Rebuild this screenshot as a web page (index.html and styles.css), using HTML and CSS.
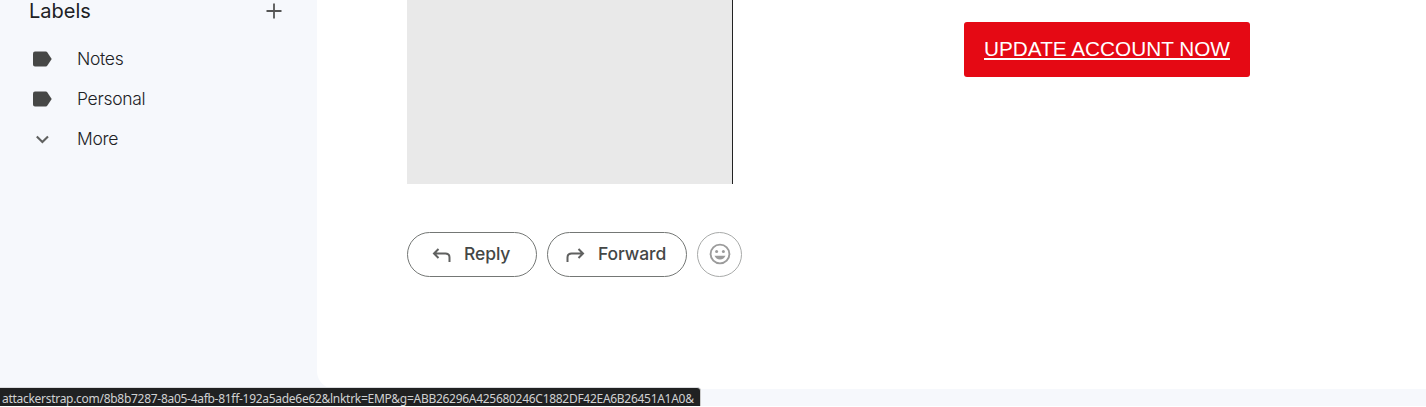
FILE: index.html
```html
<!DOCTYPE html>
<html lang="en">
<head>
<meta charset="utf-8">
<title>Mail</title>
<link rel="stylesheet" href="styles.css">
</head>
<body>
<div class="app">
  <nav class="sidebar">
    <div class="heading"><span>Labels</span>
      <svg width="16" height="16" viewBox="0 0 16 16"><path d="M8 .5v15M.5 8h15" fill="none" stroke="#555" stroke-width="1.8"/></svg>
    </div>
    <div class="label"><svg width="20" height="16" viewBox="0 0 20 16"><path d="M3 .5h10.700q1.100 0 1.700.9L19.700 8 15.400 14.600q-.6.9-1.700.9H3Q1 15.500 1 13.500v-11Q1 .5 3 .5z" fill="#464746"/></svg><span>Notes</span></div>
    <div class="label"><svg width="20" height="16" viewBox="0 0 20 16"><path d="M3 .5h10.700q1.100 0 1.700.9L19.700 8 15.400 14.600q-.6.9-1.700.9H3Q1 15.500 1 13.500v-11Q1 .5 3 .5z" fill="#464746"/></svg><span>Personal</span></div>
    <div class="label"><svg width="20" height="16" viewBox="0 0 20 16"><path d="M4.800 5.500 10.400 11 16 5.500" fill="none" stroke="#606160" stroke-width="2.100"/></svg><span>More</span></div>
  </nav>
  <main class="message">
    <div class="content">
      <div class="preview"></div>
      <a class="update"><span>UPDATE ACCOUNT NOW</span></a>
    </div>
    <div class="actions">
      <button class="pill reply"><svg width="20" height="18" viewBox="0 0 20 18"><path d="M6.500 3 2 7.500l4.500 4.500M2 7.500h11.500Q17.500 7.500 17.500 11.500V16" fill="none" stroke="#606160" stroke-width="2"/></svg><span>Reply</span></button>
      <button class="pill forward"><svg width="20" height="18" viewBox="0 0 20 18"><path d="M13.500 3 18 7.500l-4.500 4.500M18 7.500H6.500Q2.500 7.500 2.500 11.500V16" fill="none" stroke="#606160" stroke-width="2"/></svg><span>Forward</span></button>
      <button class="pill emoji" aria-label="Add reaction"><svg width="22" height="22" viewBox="0 0 22 22"><circle cx="11" cy="11" r="9.400" fill="none" stroke="#9b9b9b" stroke-width="1.900"/><circle cx="7.600" cy="8.500" r="1.500" fill="#9b9b9b"/><circle cx="14.400" cy="8.500" r="1.500" fill="#9b9b9b"/><path d="M5.500 12.800h11Q15 16.500 11 16.500T5.500 12.800z" fill="#9b9b9b"/></svg></button>
    </div>
  </main>
  <div class="status"><span>attackerstrap.com/8b8b7287-8a05-4afb-81ff-192a5ade6e62&amp;lnktrk=EMP&amp;g=ABB26296A425680246C1882DF42EA6B26451A1A0&amp;</span></div>
</div>
</body>
</html>
```
FILE: styles.css
```css
* { box-sizing: border-box; }
body { margin: 0; font-family: Inter, sans-serif; background: #f6f8fc; }
.app { position: relative; width: 1426px; height: 407px; display: flex; overflow: hidden; border-bottom: 1px solid #fff; }
.sidebar { width: 317px; flex: none; color: #202124; }
.heading { display: flex; justify-content: space-between; height: 39px; padding: 0 35px 0 29px; font-size: 20px; line-height: 22px; }
.heading svg { margin-top: 3px; }
.label { display: flex; align-items: center; height: 40px; padding-left: 32px; gap: 25px; font-size: 17.500px; font-weight: 300; letter-spacing: -.3px; }
.label span { padding-bottom: 1px; }
.label svg { flex: none; }
.message { flex: 1; height: 389px; background: #fff; border-bottom-left-radius: 18px; padding-left: 90px; }
.content { display: flex; height: 232px; align-items: flex-start; }
.preview { width: 326px; height: 184px; background: #e9e9e9; border-right: 1px solid #222; }
.update { width: 286px; height: 55px; margin: 22px 0 0 231px; padding-bottom: 2px; display: flex; align-items: center; justify-content: center; background: #e50914; border-radius: 3px; color: #fff; font: 20.750px/24px "Liberation Sans", Arial, sans-serif; text-decoration: underline; text-decoration-thickness: 2px; text-underline-offset: 2px; white-space: nowrap; }
.actions { display: flex; gap: 10px; }
.pill { display: flex; align-items: center; height: 45px; border: 1px solid #747775; border-radius: 23px; background: #fff; padding: 0; color: #444746; font: 450 17.500px Inter, sans-serif; letter-spacing: -.1px; }
.pill span { padding-bottom: 2px; }
.reply { width: 130px; padding-left: 24px; gap: 12px; }
.forward { width: 140px; padding-left: 17px; gap: 13px; }
.emoji { width: 45px; justify-content: center; border-color: #a8aaa9; }
.emoji svg { margin: 0 0 1px; }
.status { position: absolute; left: 0; top: 387px; width: 701px; height: 19px; background: #202122; border-top: 1px solid #dcdde0; border-right: 1px solid #ccc; border-top-right-radius: 4px; color: #d0d1d2; font: 12px/21px "Noto Sans", sans-serif; letter-spacing: -.288px; padding-left: 2px; white-space: nowrap; }
```
